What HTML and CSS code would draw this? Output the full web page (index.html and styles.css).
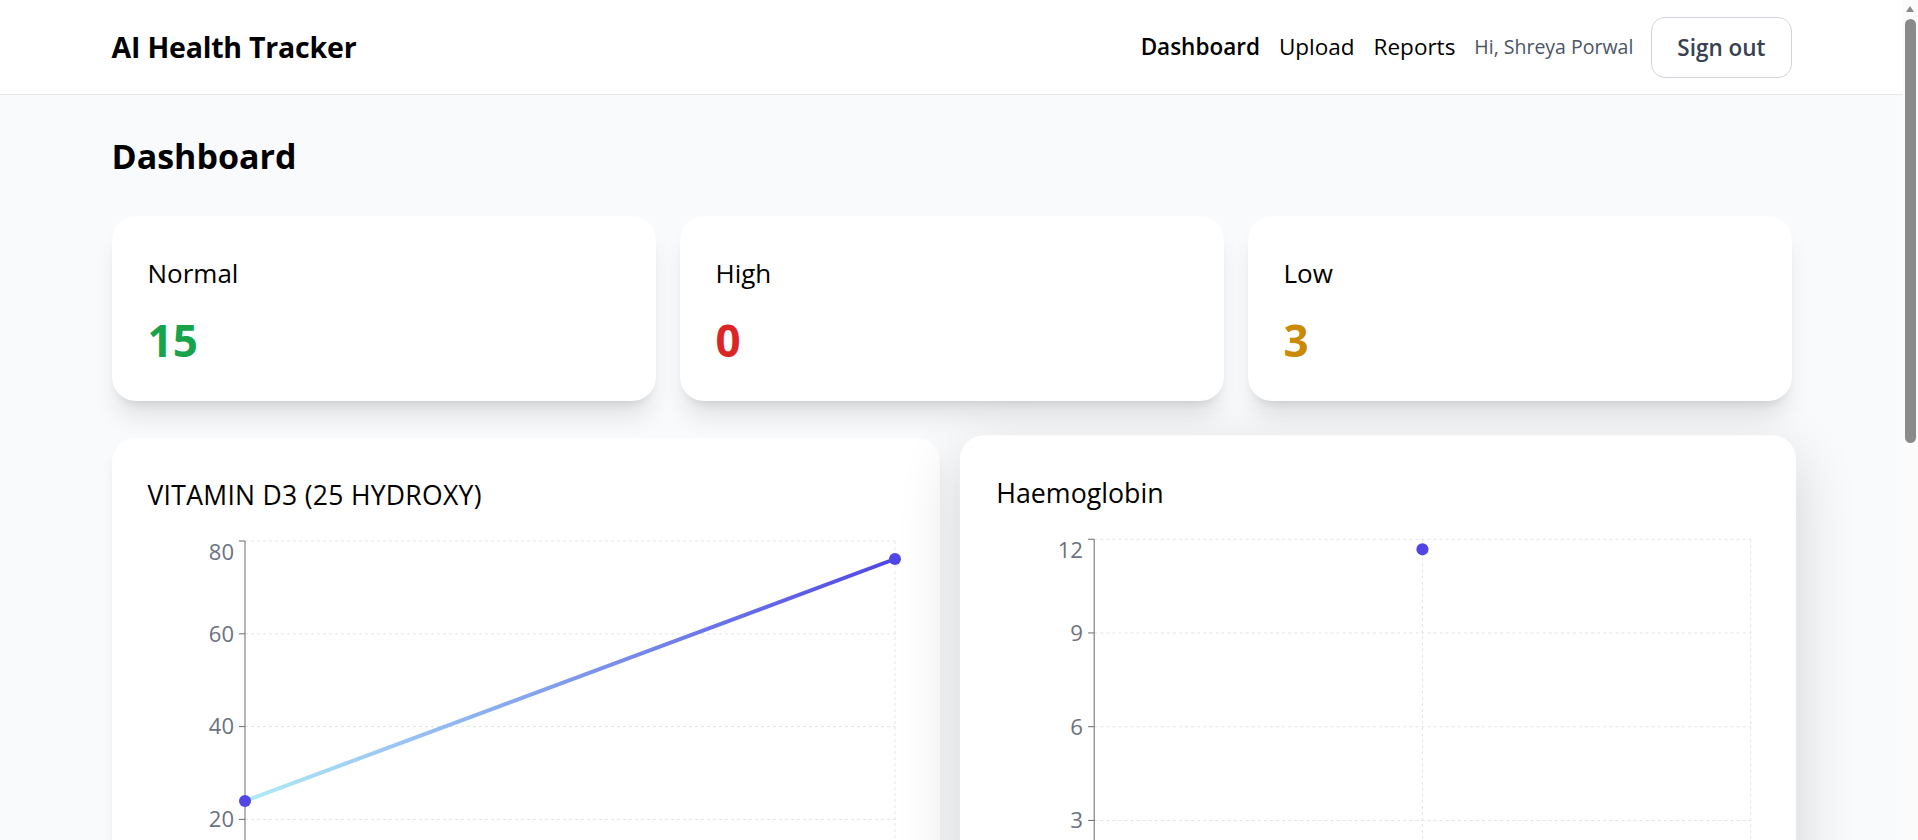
FILE: index.html
```html
<!DOCTYPE html>
<html lang="en">
<head>
<meta charset="utf-8">
<title>AI Health Tracker</title>
<link rel="stylesheet" href="styles.css">
</head>
<body>
<header class="topbar">
  <div class="container topbar__inner">
    <div class="brand">AI Health Tracker</div>
    <nav class="nav">
      <a class="nav__link nav__link--active" href="#">Dashboard</a>
      <a class="nav__link" href="#">Upload</a>
      <a class="nav__link" href="#">Reports</a>
      <span class="nav__greeting">Hi, Shreya Porwal</span>
      <button class="btn-signout" type="button">Sign out</button>
    </nav>
  </div>
</header>

<main class="container page">
  <h1 class="page__title">Dashboard</h1>

  <section class="stats">
    <div class="stat-card">
      <div class="stat-card__label">Normal</div>
      <div class="stat-card__value stat-card__value--normal">15</div>
    </div>
    <div class="stat-card">
      <div class="stat-card__label">High</div>
      <div class="stat-card__value stat-card__value--high">0</div>
    </div>
    <div class="stat-card">
      <div class="stat-card__label">Low</div>
      <div class="stat-card__value stat-card__value--low">3</div>
    </div>
  </section>

  <section class="charts">
    <div class="chart-card">
      <h2 class="chart-card__title chart-card__title--caps">VITAMIN D3 (25 HYDROXY)</h2>
      <svg class="chart" viewBox="0 0 754 430" width="754" height="430">
        <defs>
          <linearGradient id="lineGrad" x1="0" y1="0" x2="1" y2="0">
            <stop offset="0" stop-color="#b0ecf6"/>
            <stop offset="1" stop-color="#4f46e5"/>
          </linearGradient>
        </defs>
        <g class="chart__grid">
          <line x1="97" y1="10" x2="747" y2="10"/>
          <line x1="97" y1="102.8" x2="747" y2="102.8"/>
          <line x1="97" y1="195.6" x2="747" y2="195.6"/>
          <line x1="97" y1="288.4" x2="747" y2="288.4"/>
          <line x1="97" y1="381.2" x2="747" y2="381.2"/>
          <line x1="747" y1="10" x2="747" y2="381.2"/>
        </g>
        <g class="chart__axis">
          <line x1="97" y1="10" x2="97" y2="381.2"/>
          <line x1="91" y1="10" x2="97" y2="10"/>
          <line x1="91" y1="102.8" x2="97" y2="102.8"/>
          <line x1="91" y1="195.6" x2="97" y2="195.6"/>
          <line x1="91" y1="288.4" x2="97" y2="288.4"/>
          <line x1="91" y1="381.2" x2="97" y2="381.2"/>
          <line x1="97" y1="381.2" x2="747" y2="381.2"/>
          <line x1="97" y1="381.2" x2="97" y2="387.2"/>
          <line x1="747" y1="381.2" x2="747" y2="387.2"/>
        </g>
        <g class="chart__ticks">
          <text x="86" y="21" dy="0.355em">80</text>
          <text x="86" y="102.8" dy="0.355em">60</text>
          <text x="86" y="195.6" dy="0.355em">40</text>
          <text x="86" y="288.4" dy="0.355em">20</text>
          <text x="86" y="381.2" dy="0.355em">0</text>
        </g>
        <g class="chart__xticks">
          <text x="97" y="410">2024-11-12</text>
          <text x="747" y="410" class="chart__xtick--end">2025-06-03</text>
        </g>
        <path class="chart__line" d="M97 270 L747 28" stroke="url(#lineGrad)"/>
        <circle class="chart__dot" cx="97" cy="270" r="6"/>
        <circle class="chart__dot" cx="747" cy="28" r="6"/>
      </svg>
    </div>

    <div class="chart-card chart-card--hover">
      <h2 class="chart-card__title">Haemoglobin</h2>
      <svg class="chart" viewBox="0 0 754 430" width="754" height="430">
        <g class="chart__grid">
          <line x1="97" y1="10" x2="747" y2="10"/>
          <line x1="97" y1="102.8" x2="747" y2="102.8"/>
          <line x1="97" y1="195.6" x2="747" y2="195.6"/>
          <line x1="97" y1="288.4" x2="747" y2="288.4"/>
          <line x1="97" y1="381.2" x2="747" y2="381.2"/>
          <line x1="422" y1="10" x2="422" y2="381.2"/>
          <line x1="747" y1="10" x2="747" y2="381.2"/>
        </g>
        <g class="chart__axis">
          <line x1="97" y1="10" x2="97" y2="381.2"/>
          <line x1="91" y1="10" x2="97" y2="10"/>
          <line x1="91" y1="102.8" x2="97" y2="102.8"/>
          <line x1="91" y1="195.6" x2="97" y2="195.6"/>
          <line x1="91" y1="288.4" x2="97" y2="288.4"/>
          <line x1="91" y1="381.2" x2="97" y2="381.2"/>
          <line x1="97" y1="381.2" x2="747" y2="381.2"/>
          <line x1="422" y1="381.2" x2="422" y2="387.2"/>
        </g>
        <g class="chart__ticks">
          <text x="86" y="21" dy="0.355em">12</text>
          <text x="86" y="102.8" dy="0.355em">9</text>
          <text x="86" y="195.6" dy="0.355em">6</text>
          <text x="86" y="288.4" dy="0.355em">3</text>
          <text x="86" y="381.2" dy="0.355em">0</text>
        </g>
        <g class="chart__xticks">
          <text x="422" y="410" class="chart__xtick--mid">2025-06-03</text>
        </g>
        <circle class="chart__dot" cx="422" cy="20" r="6"/>
      </svg>
    </div>
  </section>
</main>

<div class="scrollbar" aria-hidden="true">
  <div class="scrollbar__arrow"></div>
  <div class="scrollbar__thumb"></div>
</div>
</body>
</html>
```

FILE: styles.css
```css
* {
  box-sizing: border-box;
}

html,
body {
  margin: 0;
  padding: 0;
}

body {
  margin-right: 15px;
  background: #f9fafb;
  color: #000;
  font-family: "Open Sans", "Noto Sans", "Liberation Sans", sans-serif;
}

.container {
  max-width: 1680px;
  margin: 0 auto;
}

/* Header */
.topbar {
  background: #fff;
  border-bottom: 1px solid #e5e7eb;
}

.topbar__inner {
  height: 94px;
  display: flex;
  align-items: center;
  justify-content: space-between;
}

.brand {
  font-size: 28.5px;
  font-weight: 700;
  line-height: 40px;
  letter-spacing: -0.2px;
}

.nav {
  display: flex;
  align-items: center;
  gap: 19px;
}

.nav__link {
  color: #000;
  text-decoration: none;
  font-size: 22.5px;
  line-height: 32px;
}

.nav__link--active {
  font-weight: 600;
}

.nav__greeting {
  color: #4b5563;
  font-size: 19.5px;
  line-height: 28px;
}

.btn-signout {
  font-family: inherit;
  font-size: 22.5px;
  font-weight: 600;
  line-height: 35px;
  color: #374151;
  background: #fff;
  border: 1px solid #d1d5db;
  border-radius: 14px;
  padding: 12px 25px;
  margin-left: -1px;
}

/* Page */
.page {
  padding-top: 39px;
  padding-bottom: 60px;
}

.page__title {
  margin: 0;
  font-size: 34px;
  font-weight: 700;
  line-height: 45px;
}

.stats {
  margin-top: 37px;
  display: grid;
  grid-template-columns: repeat(3, 1fr);
  gap: 24px;
}

.stat-card {
  background: #fff;
  border-radius: 24px;
  padding: 40px 36px 36px;
  box-shadow: 0 20px 25px -5px rgba(0, 0, 0, 0.1), 0 8px 10px -6px rgba(0, 0, 0, 0.1);
}

.stat-card__label {
  font-size: 26px;
  font-weight: 500;
  line-height: 35px;
}

.stat-card__value {
  margin-top: 24px;
  font-size: 44px;
  font-weight: 700;
  line-height: 50px;
}

.stat-card__value--normal { color: #16a34a; }
.stat-card__value--high { color: #dc2626; }
.stat-card__value--low { color: #ca8a04; }

/* Charts */
.charts {
  margin-top: 37px;
  display: grid;
  grid-template-columns: repeat(2, 1fr);
  gap: 24px;
}

.chart-card {
  background: #fff;
  border-radius: 24px;
  padding: 40px 36px 36px;
  box-shadow: 0 10px 15px -3px rgba(0, 0, 0, 0.08), 0 4px 6px -4px rgba(0, 0, 0, 0.08);
}

.chart-card--hover {
  transform: scale(1.01);
  box-shadow: 0 20px 60px rgba(0, 0, 0, 0.16);
}

.chart-card__title {
  margin: 0;
  font-size: 26.5px;
  font-weight: 500;
  line-height: 35px;
}

.chart-card__title--caps {
  letter-spacing: 0.3px;
}

.chart {
  display: block;
  margin-top: 18px;
  overflow: visible;
}

.chart__grid line {
  stroke: #e2e4e8;
  stroke-width: 1;
  stroke-dasharray: 3 3;
}

.chart__axis line {
  stroke: #6b6b6b;
  stroke-width: 1;
}

.chart__ticks text,
.chart__xticks text {
  font-family: "Open Sans", "Noto Sans", sans-serif;
  font-size: 22px;
  fill: #6b7280;
}

.chart__ticks text {
  text-anchor: end;
}

.chart__xticks text {
  text-anchor: start;
}

.chart__xticks .chart__xtick--end {
  text-anchor: end;
}

.chart__xticks .chart__xtick--mid {
  text-anchor: middle;
}

.chart__line {
  fill: none;
  stroke-width: 4;
  stroke-linecap: round;
}

.chart__dot {
  fill: #4f46e5;
}

/* Simulated browser scrollbar (overlays the page edge) */
.scrollbar {
  position: fixed;
  top: 0;
  right: 0;
  width: 15px;
  height: 100%;
  background: #fbfbfb;
}

.scrollbar__arrow {
  position: absolute;
  top: 6px;
  left: 3px;
  width: 0;
  height: 0;
  border-left: 4.5px solid transparent;
  border-right: 4.5px solid transparent;
  border-bottom: 6px solid #8a8a8a;
}

.scrollbar__thumb {
  position: absolute;
  top: 19px;
  left: 2px;
  width: 11px;
  height: 424px;
  border-radius: 6px;
  background: #8a8a8a;
}
```
